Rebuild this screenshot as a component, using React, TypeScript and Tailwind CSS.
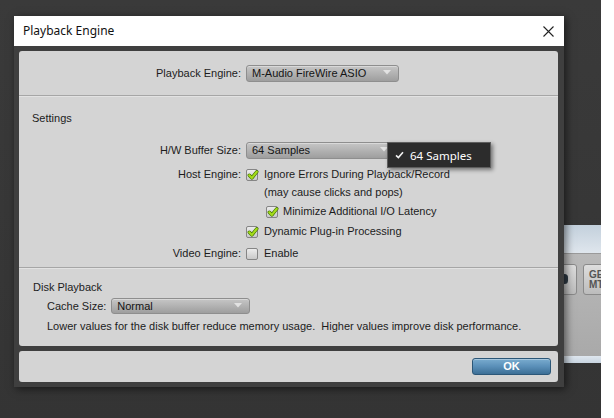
import React from "react";

function Dropdown({ w, text }: { w: string; text: string }) {
  return (
    <div
      className={`${w} h-full relative rounded-[3px] border border-[#8e8e8e] bg-gradient-to-b from-[#c6c6c6] via-[#b2b2b2] to-[#9e9e9e] shadow-[inset_0_1px_0_rgba(255,255,255,0.35)] flex items-center pl-[5px] text-[#141414] text-[11px] leading-none`}
    >
      <span>{text}</span>
      <svg className="absolute right-[7px] top-[4px]" width="8" height="5" viewBox="0 0 8 5">
        <path d="M0 0 H8 L4 4.5 Z" fill="#e2e2e2" />
      </svg>
    </div>
  );
}

function Check({ checked }: { checked: boolean }) {
  return (
    <div className="w-[12px] h-[12px] rounded-[2px] border border-[#858585] bg-gradient-to-b from-[#ececec] to-[#c9c9c9] relative shrink-0">
      {checked && (
        <svg className="absolute left-[0px] top-[-1px]" width="12" height="12" viewBox="0 0 12 12">
          <path d="M2.3 6.2 L4.9 8.9 L9.8 2.8" fill="none" stroke="#3e6d00" strokeWidth="3.4" strokeLinecap="round" strokeLinejoin="round" />
          <path d="M2.3 6.2 L4.9 8.9 L9.8 2.8" fill="none" stroke="#a3dc1a" strokeWidth="2.2" strokeLinecap="round" strokeLinejoin="round" />
        </svg>
      )}
    </div>
  );
}

function Label({ children }: { children: React.ReactNode }) {
  return <div className="w-[227px] pr-[5px] text-right shrink-0">{children}</div>;
}

export default function App() {
  return (
    <div className="w-[614px] h-[418px] relative overflow-hidden bg-gradient-to-b from-[#3a3a3a] to-[#343434] font-['Liberation_Sans',Arial,sans-serif]">
      {/* white strip at right edge */}
      <div className="absolute right-0 top-0 w-[13px] h-full bg-white" />

      {/* background app window behind dialog */}
      <div className="absolute left-[540px] top-[225px] w-[61px] h-[138px] flex flex-col overflow-hidden">
        <div className="h-[29px] bg-gradient-to-b from-[#c3d0dc] to-[#dfe6ed] border-b border-[#9a9a9a]" />
        <div className="flex-1 bg-gradient-to-b from-[#b9b9b9] to-[#a9a9a9] relative">
          <div className="absolute left-[14px] top-[10px] w-[23px] h-[31px] rounded-[3px] border border-[#8a8a8a] bg-gradient-to-b from-[#dedede] to-[#bcbcbc]">
            <div className="absolute left-[6px] top-[9px] w-[7px] h-[10px] rounded-full bg-[#2e3a44]" />
          </div>
          <div className="absolute left-[43px] top-[10px] w-[30px] h-[31px] rounded-[3px] border border-[#8a8a8a] bg-gradient-to-b from-[#dedede] to-[#bcbcbc] pl-[5px] pt-[5px] text-[10px] leading-[10px] font-bold text-[#555]">
            <div>GE</div>
            <div>MT</div>
          </div>
        </div>
        <div className="h-[7px] bg-gradient-to-b from-[#dfe7ef] to-[#c9d5e1]" />
      </div>

      {/* dialog window */}
      <div className="absolute left-[14px] top-[16px] w-[550px] h-[371px] flex flex-col bg-[#3f3f3f] shadow-[2px_2px_8px_rgba(0,0,0,0.55)]">
        <div className="h-[30px] bg-white flex items-center justify-between pl-[9px] pr-[10px] shrink-0">
          <span className="text-[12px] text-[#111] font-['Noto_Sans',sans-serif]">Playback Engine</span>
          <svg width="11" height="11" viewBox="0 0 11 11">
            <path d="M0.5 0.5 L10.5 10.5 M10.5 0.5 L0.5 10.5" stroke="#222" strokeWidth="1.1" />
          </svg>
        </div>
        <div className="flex-1 flex flex-col pl-[5px] pr-[6px] pt-[5px] pb-[5px] gap-[5px]">
          <div className="h-[295px] rounded-[3px] bg-[#d4d4d4] relative flex flex-col text-[11px] leading-[13px] text-[#1c1c1c]">
            <div className="mt-[14px] h-[17px] flex items-center">
              <Label>Playback Engine:</Label>
              <Dropdown w="w-[153px]" text="M-Audio FireWire ASIO" />
            </div>
            <div className="mt-[13px] h-[2px] border-t border-[#a6a6a6] border-b border-b-[#e2e2e2]" />
            <div className="mt-[15px] h-[13px] pl-[13px]">Settings</div>
            <div className="mt-[17px] h-[17px] flex items-center">
              <Label>H/W Buffer Size:</Label>
              <Dropdown w="w-[150px]" text="64 Samples" />
            </div>
            <div className="mt-[9px] h-[13px] flex items-center">
              <Label>Host Engine:</Label>
              <Check checked />
              <span className="ml-[6px]">Ignore Errors During Playback/Record</span>
            </div>
            <div className="mt-[5px] h-[13px] flex items-center">
              <div className="w-[245px] shrink-0" />
              <span>(may cause clicks and pops)</span>
            </div>
            <div className="mt-[6px] h-[13px] flex items-center">
              <div className="w-[247px] shrink-0" />
              <Check checked />
              <span className="ml-[5px]">Minimize Additional I/O Latency</span>
            </div>
            <div className="mt-[7px] h-[13px] flex items-center">
              <div className="w-[227px] shrink-0" />
              <Check checked />
              <span className="ml-[6px]">Dynamic Plug-in Processing</span>
            </div>
            <div className="mt-[9px] h-[13px] flex items-center">
              <Label>Video Engine:</Label>
              <Check checked={false} />
              <span className="ml-[6px]">Enable</span>
            </div>
            <div className="mt-[7px] h-[2px] border-t border-[#a6a6a6] border-b border-b-[#e2e2e2]" />
            <div className="mt-[12px] h-[13px] pl-[14px]">Disk Playback</div>
            <div className="mt-[4px] h-[16px] flex items-center pl-[28px]">
              <span className="mr-[5px]">Cache Size:</span>
              <Dropdown w="w-[139px]" text="Normal" />
            </div>
            <div className="mt-[6px] h-[13px] pl-[28px] whitespace-pre">
              Lower values for the disk buffer reduce memory usage.  Higher values improve disk performance.
            </div>

            {/* open popup menu */}
            <div className="absolute left-[368px] top-[91px] w-[104px] h-[26px] bg-[#2c2c2c] border border-[#5e5e5e] shadow-[2px_2px_4px_rgba(0,0,0,0.45)] flex items-center pl-[7px] text-white font-['Noto_Sans',sans-serif] text-[11.5px]">
              <svg width="9" height="8" viewBox="0 0 9 8" className="mr-[6px]">
                <path d="M1 4.3 L3.4 6.6 L8 1.2" fill="none" stroke="#f2f2f2" strokeWidth="1.6" />
              </svg>
              <span>64 Samples</span>
            </div>
          </div>
          <div className="h-[31px] rounded-[3px] bg-[#d4d4d4] flex items-center justify-end pr-[7px]">
            <div className="w-[79px] h-[17px] rounded-[3px] border border-[#2c5778] bg-gradient-to-b from-[#7aaccf] via-[#5a8fb8] to-[#3d6f96] shadow-[inset_0_1px_0_rgba(255,255,255,0.35)] flex items-center justify-center text-white text-[11px] font-bold">
              OK
            </div>
          </div>
        </div>
      </div>
    </div>
  );
}
